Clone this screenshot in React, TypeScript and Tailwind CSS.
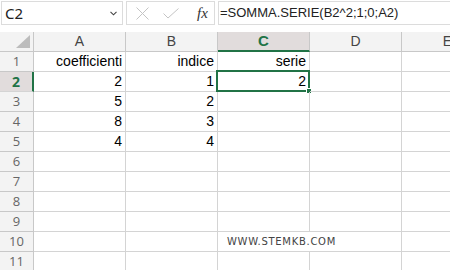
import React from "react"

const cols = ["A", "B", "C", "D", "E"]

const data: Record<number, string[]> = {
    1: ["coefficienti", "indice", "serie", "", ""],
    2: ["2", "1", "2", "", ""],
    3: ["5", "2", "", "", ""],
    4: ["8", "3", "", "", ""],
    5: ["4", "4", "", "", ""],
}

function Corner() {
    return (
        <div className="relative border-r border-b border-[#c8c8c8] bg-[#f3f3f3]">
            <svg className="absolute right-[3px] bottom-[3px]" width="14" height="13" viewBox="0 0 14 13">
                <polygon points="14,0 14,13 0,13" fill="#bcbcbc" />
            </svg>
        </div>
    )
}

function ColHeader({ name }: { name: string }) {
    const active = name === "C"
    return (
        <div
            className={
                active
                    ? "flex items-center justify-center border-r border-[#c8c8c8] border-b-2 border-b-[#217346] bg-[#e1dcdc] text-[15px] font-bold text-[#217346]"
                    : "flex items-center justify-center border-r border-b border-[#c8c8c8] bg-[#f3f3f3] text-[14px] text-[#444]"
            }
        >
            {name}
        </div>
    )
}

function RowHeader({ n }: { n: number }) {
    const active = n === 2
    return (
        <div
            className={
                active
                    ? "flex items-center justify-center border-b border-[#d4d4d4] border-r-2 border-r-[#217346] bg-[#e1dcdc] font-['Noto_Sans',sans-serif] text-[14px] font-bold text-[#217346]"
                    : "flex items-center justify-center border-r border-b border-[#c8c8c8] bg-[#f3f3f3] font-['Open_Sans',sans-serif] text-[13px] text-[#666]"
            }
        >
            {n}
        </div>
    )
}

function Cell({ row, col, value }: { row: number; col: number; value: string }) {
    const selected = row === 2 && col === 2
    const watermark = row === 10 && col === 2
    if (watermark) {
        return (
            <div className="relative flex items-center border-b border-[#d4d4d4] pl-[9px]">
                <span className="whitespace-nowrap font-['DejaVu_Sans',sans-serif] text-[10px] tracking-[0.7px] text-[#444]">
                    WWW.STEMKB.COM
                </span>
            </div>
        )
    }
    return (
        <div className="relative flex items-end justify-end border-r border-b border-[#d4d4d4] pr-[3px] pb-[1px] text-[14px] leading-[18px] text-black">
            {value}
            {selected && (
                <>
                    <div className="absolute top-[-2px] left-[-2px] right-[-1px] bottom-[-1px] border-2 border-[#217346]" />
                    <div className="absolute right-[-3px] bottom-[-3px] h-[6px] w-[6px] border border-white bg-[#217346]" />
                </>
            )}
        </div>
    )
}

export default function App() {
    const rows = Array.from({ length: 11 }, (_, i) => i + 1)
    return (
        <div className="h-[270px] w-[450px] overflow-hidden bg-white font-['Liberation_Sans',sans-serif]">
            <div className="flex h-[32px] items-start gap-[3px] pt-[1px] pl-[1px]">
                <div className="flex h-[24px] w-[122px] shrink-0 items-center justify-between border border-[#dcdcdc] bg-white pl-[3px] pr-[5px] font-['Noto_Sans',sans-serif] text-[15px] text-[#222]">
                    <span>C2</span>
                    <svg width="7" height="5" viewBox="0 0 7 5">
                        <path d="M0.5 0.8 L3.5 3.8 L6.5 0.8" fill="none" stroke="#444" strokeWidth="1.1" />
                    </svg>
                </div>
                <div className="flex h-[24px] w-[89px] shrink-0 items-center border border-[#dcdcdc] bg-white">
                    <svg className="ml-[9px]" width="13" height="13" viewBox="0 0 13 13">
                        <path d="M0.5 0.5 L12.5 12.5 M12.5 0.5 L0.5 12.5" stroke="#c4c4c4" strokeWidth="1" />
                    </svg>
                    <svg className="ml-[14px]" width="16" height="11" viewBox="0 0 16 11">
                        <path d="M0.5 5.5 L5 10 L15.5 0.5" fill="none" stroke="#c4c4c4" strokeWidth="1" />
                    </svg>
                    <span className="ml-[18px] font-['Liberation_Serif',serif] text-[15px] italic text-[#333]">fx</span>
                </div>
                <div className="flex h-[24px] flex-1 items-center border border-r-0 border-[#dcdcdc] bg-white pl-[1px] text-[13px] text-[#222]">
                    =SOMMA.SERIE(B2^2;1;0;A2)
                </div>
            </div>
            <div className="grid grid-cols-[34px_92px_92px_92px_92px_92px] auto-rows-[20px]">
                <Corner />
                {cols.map((c) => (
                    <ColHeader key={c} name={c} />
                ))}
                {rows.map((r) => (
                    <React.Fragment key={r}>
                        <RowHeader n={r} />
                        {cols.map((c, ci) => (
                            <Cell key={c} row={r} col={ci} value={data[r]?.[ci] ?? ""} />
                        ))}
                    </React.Fragment>
                ))}
            </div>
        </div>
    )
}
